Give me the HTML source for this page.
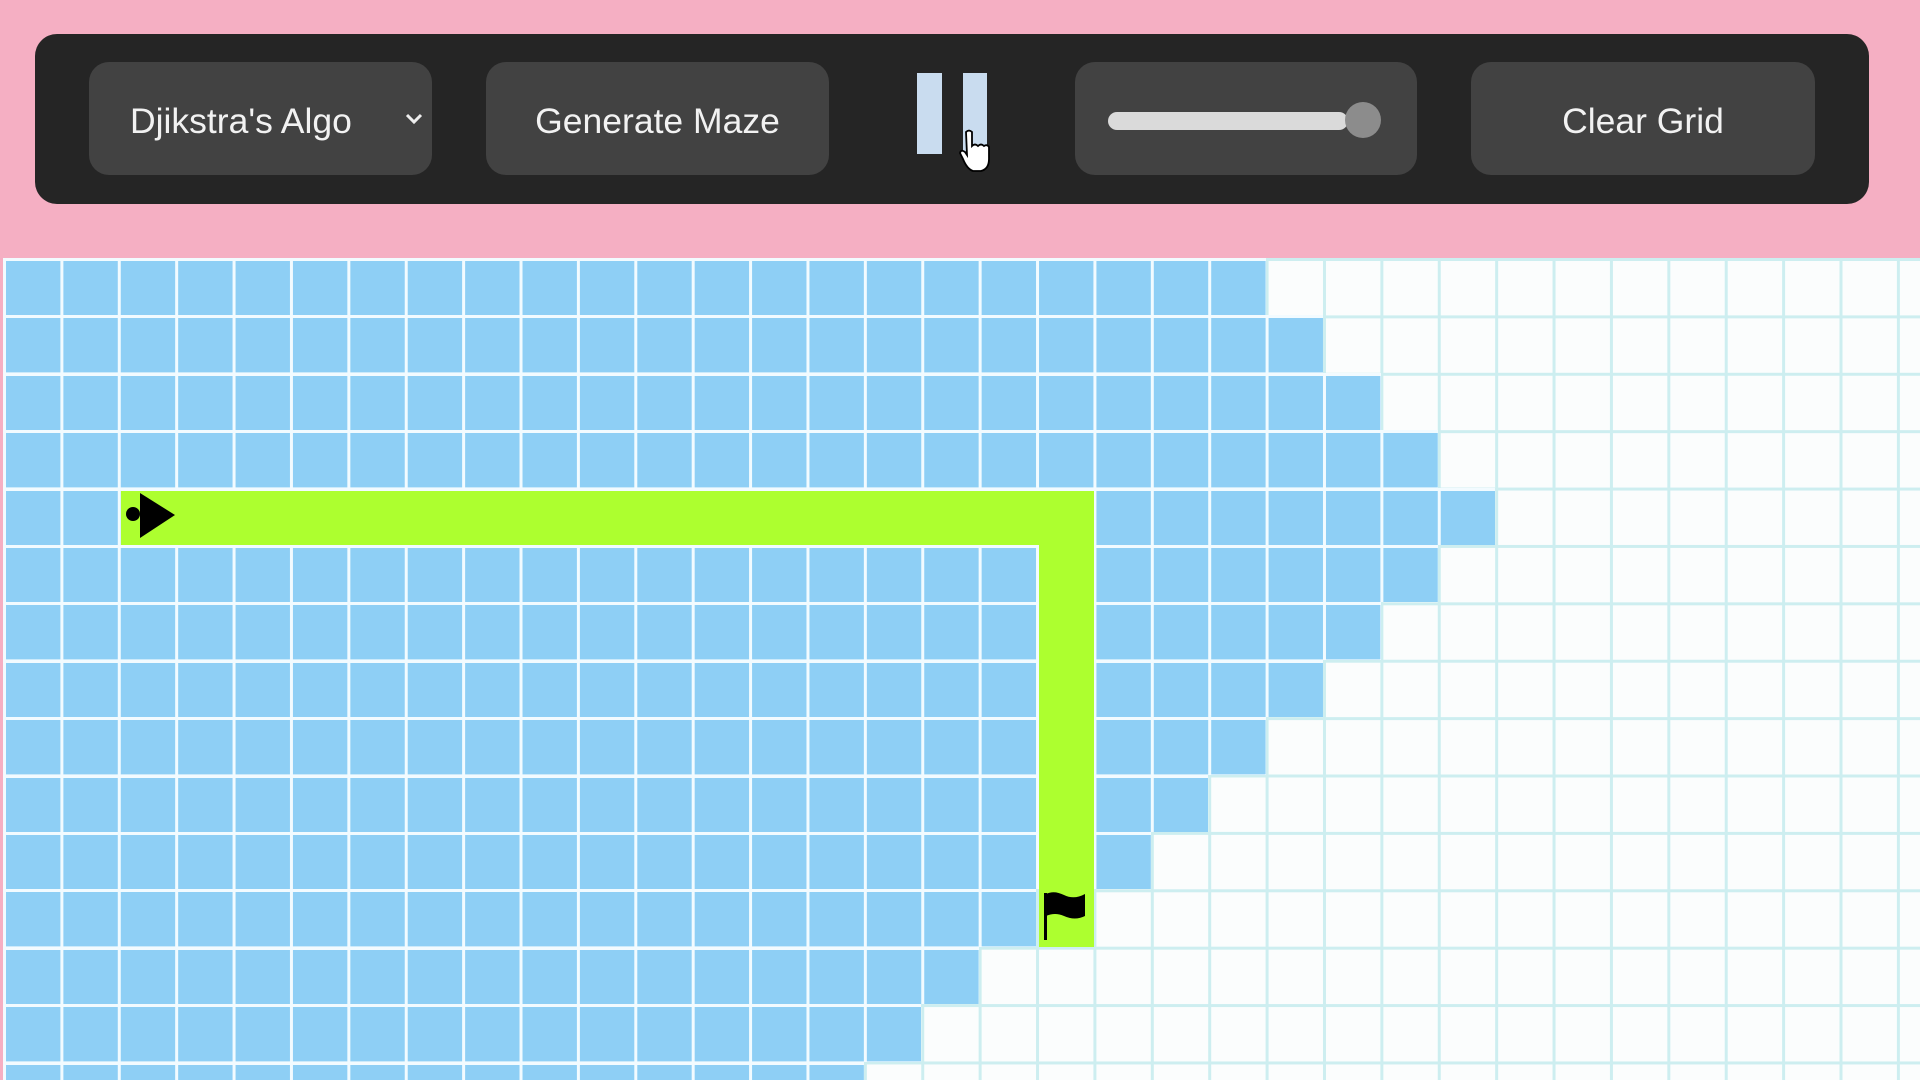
<!DOCTYPE html>
<html style="width:1920px;height:1080px;overflow:hidden;background:#f5afc3"><head><meta charset="utf-8"><style>
*{margin:0;padding:0;box-sizing:border-box}
body{width:1920px;height:1080px;overflow:hidden;background:#f5afc3;font-family:"Liberation Sans",sans-serif;position:relative}
.bar{position:absolute;left:35px;top:34px;width:1834px;height:170px;background:#252525;border-radius:22px}
.btn{position:absolute;top:62px;height:113px;background:#424242;border-radius:20px;color:#f2f2f2;font-size:35.5px;display:flex;align-items:center;justify-content:center;padding-top:6px}
.grid{position:absolute;left:3px;top:258px;width:1917px;height:822px;overflow:hidden;background-color:#fbfdfd;
background-image:linear-gradient(90deg,#cdeef0 0 3px,transparent 3px),linear-gradient(#cdeef0 0 3px,transparent 3px);
background-size:57.4px 57.4px}
.b{position:absolute;left:0;height:57.4px;background-color:#8ecff5;
background-image:linear-gradient(90deg,#f2fbff 0 3px,transparent 3px),linear-gradient(#f2fbff 0 3px,transparent 3px);
background-size:57.4px 57.4px}
.g{position:absolute;background:#adff2f}
</style></head><body>
<div class="bar"></div>
<div class="btn" style="left:89px;width:343px;justify-content:flex-start;padding-left:41px">Djikstra's Algo
<svg style="position:absolute;right:8px;top:50px" width="20" height="14" viewBox="0 0 20 14"><path d="M3 3 L10 10 L17 3" stroke="#eee" stroke-width="3" fill="none"/></svg></div>
<div class="btn" style="left:486px;width:343px">Generate Maze</div>
<div style="position:absolute;left:917px;top:73px;width:25px;height:81px;background:#c9dcef"></div>
<div style="position:absolute;left:963px;top:73px;width:24px;height:81px;background:#c9dcef"></div>
<svg style="position:absolute;left:958px;top:128px" width="34" height="46" viewBox="0 0 34 46"><path d="M8 4 q3-3 6 0 v14 q3-3 6 0 q3-3 6 0 q3-2 5 1 v12 q0 10-8 12 h-8 q-6-2-10-12 l-3-6 q1-4 5 -1 l2 3 z" fill="#fff" stroke="#000" stroke-width="1.8"/></svg>
<div class="btn" style="left:1075px;width:342px">
<div style="position:absolute;left:33px;top:50px;width:240px;height:18px;border-radius:9px;background:#dadada"></div>
<div style="position:absolute;left:270px;top:40px;width:36px;height:36px;border-radius:50%;background:#8c8c8c"></div></div>
<div class="btn" style="left:1471px;width:344px">Clear Grid</div>
<div class="grid">
<div class="b" style="top:0;width:1262.8px"></div>
<div class="b" style="top:57.4px;width:1320.2px"></div>
<div class="b" style="top:114.8px;width:1377.6px"></div>
<div class="b" style="top:172.2px;width:1435px"></div>
<div class="b" style="top:229.6px;width:1492.4px"></div>
<div class="b" style="top:287px;width:1435px"></div>
<div class="b" style="top:344.4px;width:1377.6px"></div>
<div class="b" style="top:401.8px;width:1320.2px"></div>
<div class="b" style="top:459.2px;width:1262.8px"></div>
<div class="b" style="top:516.6px;width:1205.4px"></div>
<div class="b" style="top:574px;width:1148px"></div>
<div class="b" style="top:631.4px;width:1033.2px"></div>
<div class="b" style="top:688.8px;width:975.8px"></div>
<div class="b" style="top:746.2px;width:918.4px"></div>
<div class="b" style="top:803.6px;width:861px"></div>
<div class="g" style="left:117.8px;top:232.6px;width:972.8px;height:54.4px"></div>
<div class="g" style="left:1036.2px;top:287px;width:54.4px;height:401.8px"></div>
<svg style="position:absolute;left:117px;top:229.6px" width="57" height="57" viewBox="0 0 57 57"><circle cx="13" cy="26" r="7" fill="#000"/><path d="M20 5 L55 27 L20 50 Z" fill="#000"/></svg>
<svg style="position:absolute;left:1033.2px;top:631.4px" width="57" height="57" viewBox="0 0 57 57"><path d="M8 4 h3 v47 h-3z" fill="#000"/><path d="M10 5 q8-4 18 1 q10 5 21-1 v22 q-10 5-21 0 q-9-4-18 0z" fill="#000"/></svg>
</div>
</body></html>
